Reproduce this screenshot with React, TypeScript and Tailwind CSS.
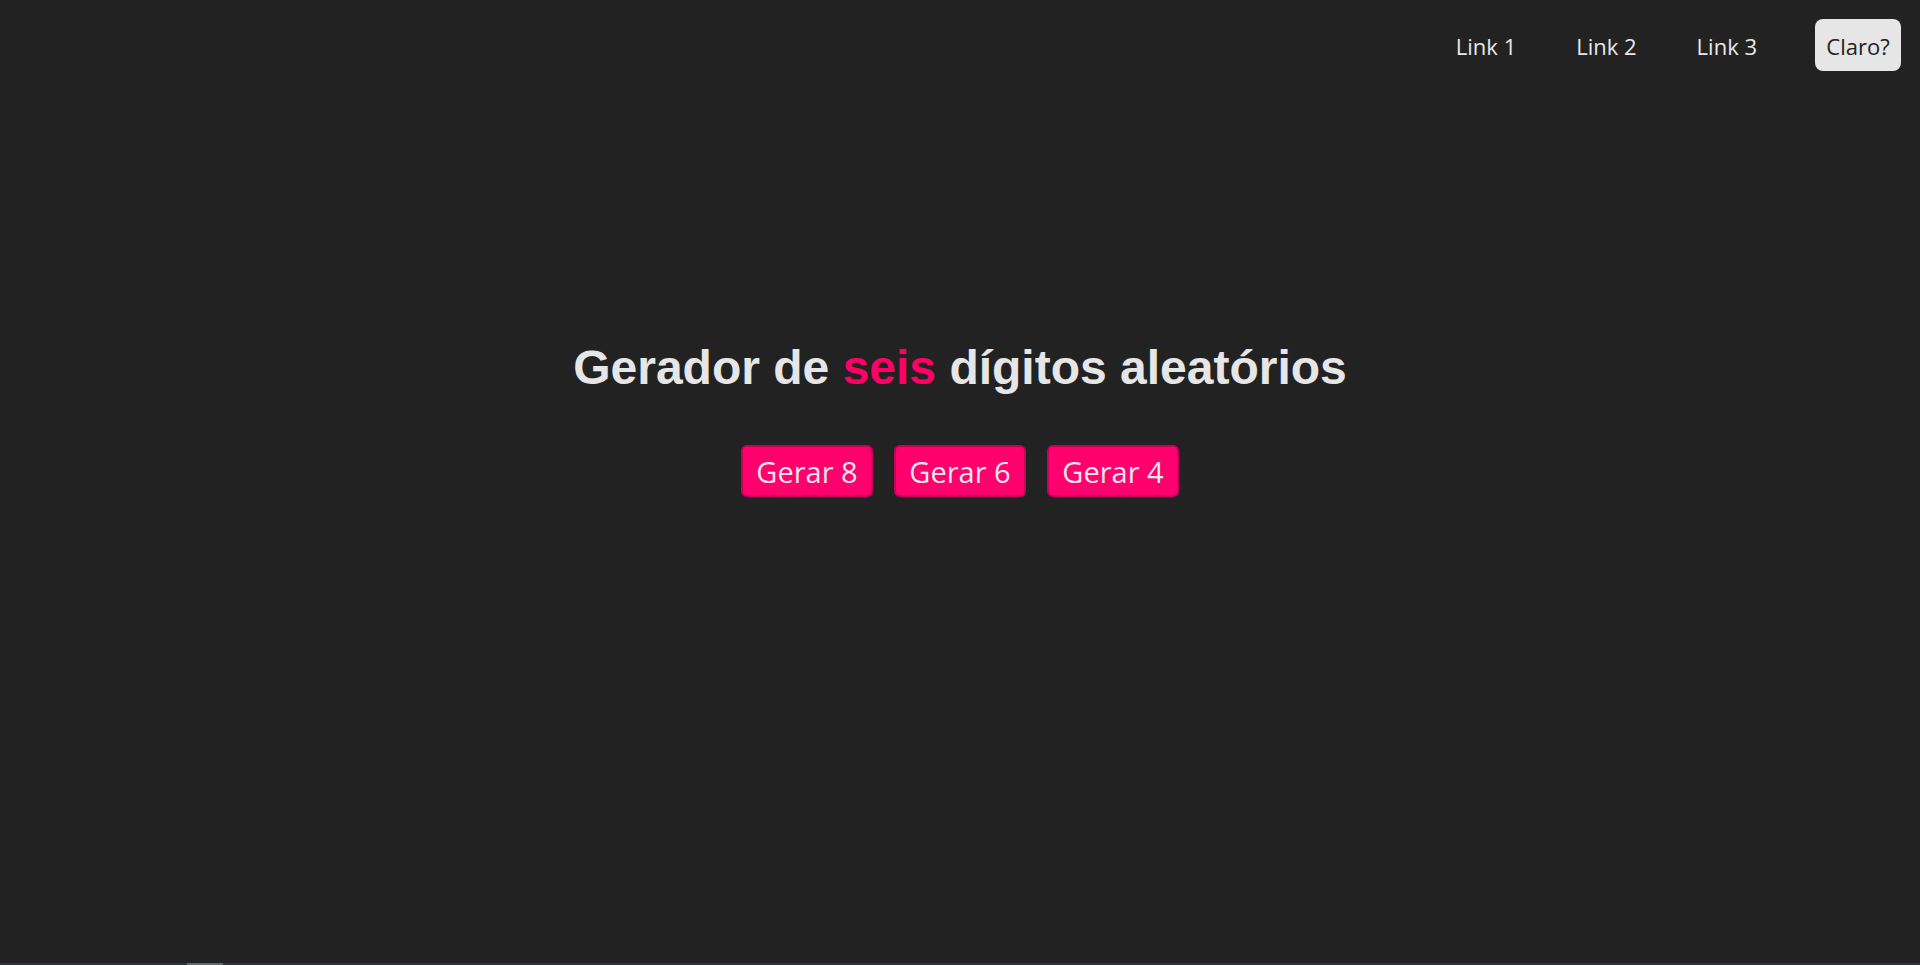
import React from "react";

export default function App() {
  return (
    <div className="flex h-[965px] flex-col overflow-hidden bg-[#222222]" style={{ fontFamily: '"Open Sans", "Noto Sans", sans-serif' }}>
      <header className="flex items-center justify-end pr-[19px] pt-[19px]">
        <nav className="flex items-center pt-[3px] text-[22px] text-[#e8e8e8]">
          <a className="px-[30px]">Link 1</a>
          <a className="px-[30px]">Link 2</a>
          <a className="px-[30px]">Link 3</a>
        </nav>
        <button className="ml-[28px] flex h-[52px] w-[86px] items-center justify-center rounded-[8px] bg-[#e6e6e6] pt-[2px] text-[22px] text-[#222222]">
          Claro?
        </button>
      </header>
      <main className="flex flex-1 flex-col items-center pt-[269px]">
        <h1
          className="text-[48px] font-bold leading-[56px] text-[#e6e6e6]"
          style={{ fontFamily: '"Liberation Sans", Arial, sans-serif' }}
        >
          Gerador de <span className="text-[#ff0066]">seis</span> dígitos aleatórios
        </h1>
        <div className="mt-[49px] flex gap-[21px]">
          {["Gerar 8", "Gerar 6", "Gerar 4"].map((t) => (
            <button
              key={t}
              className="flex h-[52px] w-[132px] items-center justify-center rounded-[6px] border-2 border-[#c8005a] bg-[#ff006e] pt-[2px] text-[29px] text-[#f2e8ea]"
            >
              {t}
            </button>
          ))}
        </div>
      </main>
      <div className="flex h-[2px] bg-[#243840]">
        <div className="ml-[187px] w-[36px] bg-[#5b6a70]" />
      </div>
    </div>
  );
}
